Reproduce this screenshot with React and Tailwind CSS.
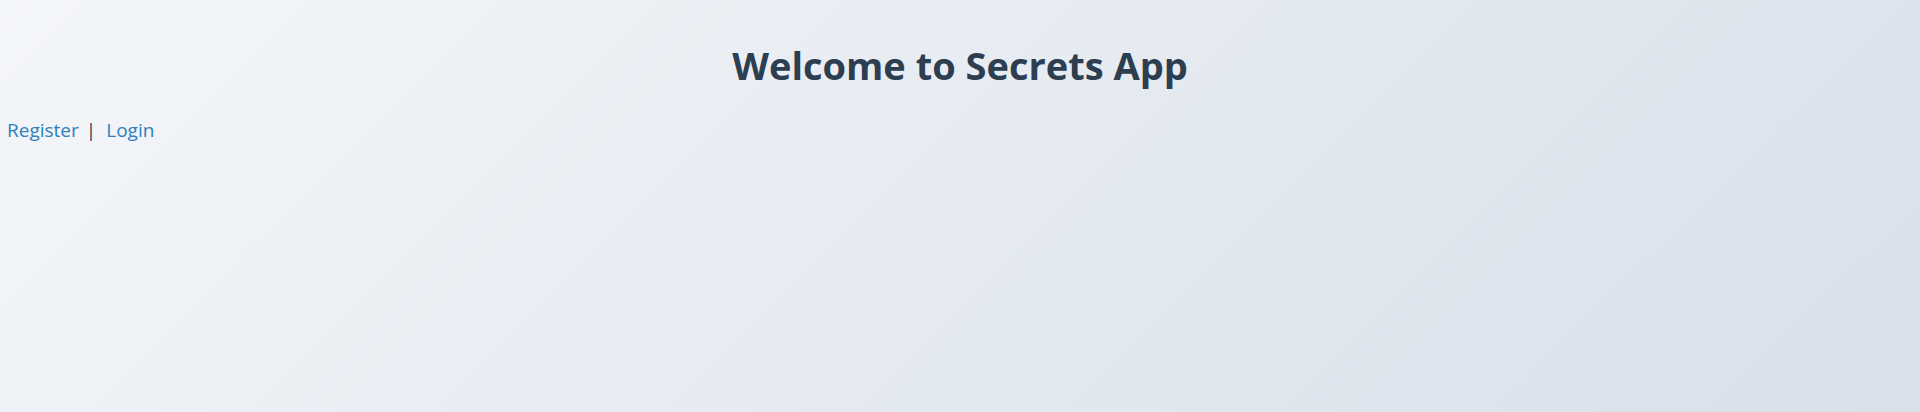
export default function App() {
  return (
    <div className="min-h-screen w-full bg-linear-135 from-[#f4f6f9] to-[#d8e0ea] font-['Open_Sans',sans-serif]">
      <h1 className="pt-[42px] text-center text-[38px] font-bold leading-[46px] text-[#2c3e50]">
        Welcome to Secrets App
      </h1>
      <div className="mt-[30px] pl-[7px] text-[19px] leading-[24px] text-[#2c3e50]">
        <a href="#" className="text-[#2e80bd]">Register</a>
        <span className="ml-[7px] mr-[10px]">|</span>
        <a href="#" className="text-[#2e80bd]">Login</a>
      </div>
    </div>
  );
}
